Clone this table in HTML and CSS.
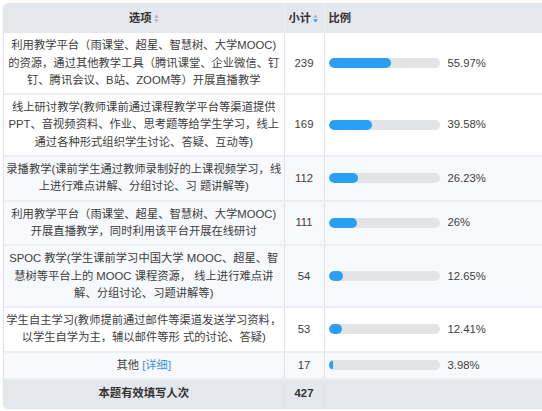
FILE: index.html
```html
<!DOCTYPE html>
<html lang="zh">
<head>
<meta charset="utf-8">
<link rel="stylesheet" href="styles.css">
</head>
<body>
<div class="card">
<table class="stat">
  <colgroup><col class="c-opt"><col class="c-num"><col class="c-ratio"></colgroup>
  <thead>
    <tr>
      <th class="opt">选项<svg class="sort" viewBox="0 0 5 9" width="5" height="9"><path d="M2.5 0.5 L4.8 3.8 H0.2 Z" fill="#b5b5b5"/><path d="M2.5 8.5 L4.8 5.2 H0.2 Z" fill="#b5b5b5"/></svg></th>
      <th class="num">小计<svg class="sort" viewBox="0 0 5 9" width="5" height="9"><path d="M2.5 0.5 L4.8 3.8 H0.2 Z" fill="#b5b5b5"/><path d="M2.5 8.5 L4.8 5.2 H0.2 Z" fill="#2a9ff6"/></svg></th>
      <th class="ratio">比例</th>
    </tr>
  </thead>
  <tbody>
    <tr>
      <td class="opt">利用教学平台（雨课堂、超星、智慧树、大学MOOC)<br>的资源，通过其他教学工具（腾讯课堂、企业微信、钉<br>钉、腾讯会议、B站、ZOOM等）开展直播教学</td>
      <td class="num">239</td>
      <td class="ratio"><div class="bar-wrap"><div class="track"><div class="fill" style="width:55.97%"></div></div><span class="pct">55.97%</span></div></td>
    </tr>
    <tr>
      <td class="opt">线上研讨教学(教师课前通过课程教学平台等渠道提供<br>PPT、音视频资料、作业、思考题等给学生学习，线上<br>通过各种形式组织学生讨论、答疑、互动等)</td>
      <td class="num">169</td>
      <td class="ratio"><div class="bar-wrap"><div class="track"><div class="fill" style="width:39.58%"></div></div><span class="pct">39.58%</span></div></td>
    </tr>
    <tr class="alt">
      <td class="opt">录播教学(课前学生通过教师录制好的上课视频学习，线<br>上进行难点讲解、分组讨论、习 题讲解等)</td>
      <td class="num">112</td>
      <td class="ratio"><div class="bar-wrap"><div class="track"><div class="fill" style="width:26.23%"></div></div><span class="pct">26.23%</span></div></td>
    </tr>
    <tr class="alt">
      <td class="opt">利用教学平台（雨课堂、超星、智慧树、大学MOOC)<br>开展直播教学，同时利用该平台开展在线研讨</td>
      <td class="num">111</td>
      <td class="ratio"><div class="bar-wrap"><div class="track"><div class="fill" style="width:26%"></div></div><span class="pct">26%</span></div></td>
    </tr>
    <tr class="alt">
      <td class="opt">SPOC 教学(学生课前学习中国大学 MOOC、超星、智<br>慧树等平台上的 MOOC 课程资源， 线上进行难点讲<br>解、分组讨论、习题讲解等)</td>
      <td class="num">54</td>
      <td class="ratio"><div class="bar-wrap"><div class="track"><div class="fill" style="width:12.65%"></div></div><span class="pct">12.65%</span></div></td>
    </tr>
    <tr>
      <td class="opt">学生自主学习(教师提前通过邮件等渠道发送学习资料，<br>以学生自学为主，辅以邮件等形 式的讨论、答疑)</td>
      <td class="num">53</td>
      <td class="ratio"><div class="bar-wrap"><div class="track"><div class="fill" style="width:12.41%"></div></div><span class="pct">12.41%</span></div></td>
    </tr>
    <tr class="alt">
      <td class="opt">其他 <a class="detail" href="#">[详细]</a></td>
      <td class="num">17</td>
      <td class="ratio"><div class="bar-wrap"><div class="track"><div class="fill" style="width:3.98%"></div></div><span class="pct">3.98%</span></div></td>
    </tr>
  </tbody>
  <tfoot>
    <tr>
      <td class="opt">本题有效填写人次</td>
      <td class="num">427</td>
      <td class="ratio"></td>
    </tr>
  </tfoot>
</table>
</div>
</body>
</html>
```

FILE: styles.css
```css
html, body {
  margin: 0;
  padding: 0;
  background: #ffffff;
  overflow: hidden;
}
body {
  font-family: "Liberation Sans", "Noto Sans CJK SC", sans-serif;
  font-size: 11.3px;
  color: #3d3d3d;
}
.card {
  margin: 3px 0 0 3px;
  width: 548px;
  border: 1px solid #e1e3e6;
  border-radius: 5px;
  overflow: hidden;
  box-shadow: 0 1px 2px rgba(0,0,0,0.06);
}
.stat {
  width: 100%;
  border-collapse: collapse;
  table-layout: fixed;
}
.c-opt { width: 280px; }
.c-num { width: 40px; }
.stat th, .stat td {
  line-height: 17.3px;
  padding: 4px 4px;
  border-right: 1px solid #e3e4e7;
  vertical-align: middle;
}
.stat td.ratio, .stat th.ratio {
  border-right: none;
  padding-left: 4px;
}
.stat thead th {
  background: #e4e7eb;
  color: #333;
  font-weight: bold;
  padding-top: 6px;
  padding-bottom: 6px;
  border-right-color: #eef0f2;
}
.stat th.opt { text-align: center; }
.stat th.num { text-align: left; padding-left: 4px; padding-right: 0; white-space: nowrap; }
.stat th.ratio { text-align: left; }
.sort {
  display: inline-block;
  vertical-align: -1px;
  margin-left: 2px;
}
.stat tbody td {
  border-bottom: 2px solid #eceef1;
  background: #ffffff;
}
.stat tbody tr.alt td {
  background: #f7f9fc;
}
.stat td.opt { text-align: center; padding-left: 2px; padding-right: 2px; }
.stat td.num { text-align: center; padding-left: 0; padding-right: 0; }
.bar-wrap {
  display: flex;
  align-items: center;
  gap: 8px;
}
.track {
  width: 111px;
  height: 10px;
  border-radius: 5px;
  background: #e3e4e6;
  overflow: hidden;
  flex: none;
}
.fill {
  height: 100%;
  background: #2a9ff6;
  border-radius: 5px;
  min-width: 4px;
}
.pct { color: #3d3d3d; }
.detail {
  color: #3b8fe4;
  text-decoration: none;
}
.stat tfoot td {
  background: #e4e7eb;
  font-weight: bold;
  color: #333;
  padding-top: 5px;
  padding-bottom: 6px;
}
```
